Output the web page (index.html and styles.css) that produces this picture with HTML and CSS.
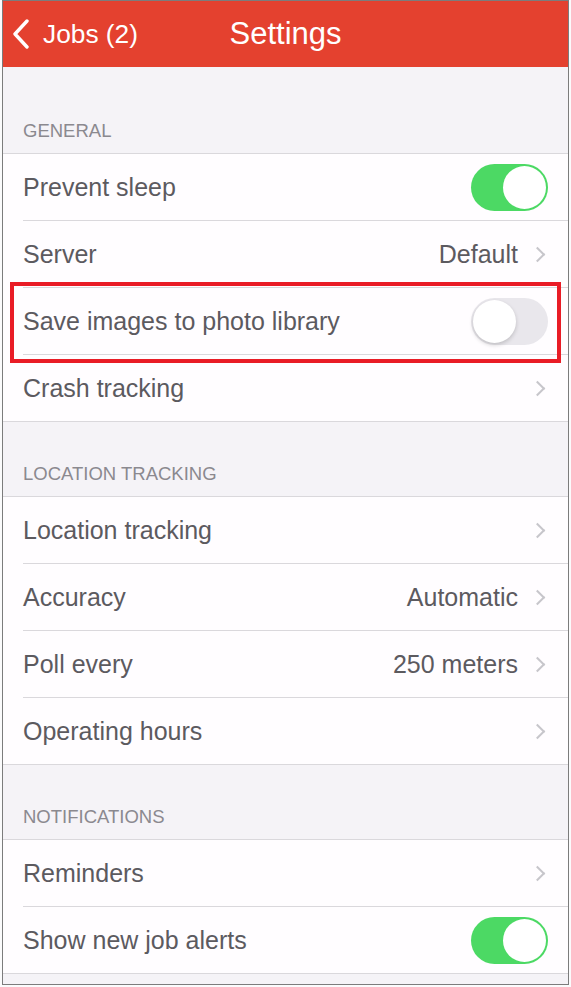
FILE: index.html
```html
<!DOCTYPE html>
<html lang="en">
<head>
  <meta charset="UTF-8">
  <title>Settings</title>
  <link rel="stylesheet" href="styles.css">
</head>
<body>
  <div class="frame">
    <header class="navbar">
      <a class="back" href="#">
        <svg width="18" height="30" viewBox="0 0 18 30"><polyline points="15,2 3,15 15,28" fill="none" stroke="#fff" stroke-width="3.4" stroke-linecap="round" stroke-linejoin="round"/></svg>
        <span>Jobs (2)</span>
      </a>
      <h1>Settings</h1>
      <span></span>
    </header>

    <div class="section-title first">GENERAL</div>
    <div class="group">
      <div class="row"><div class="cell"><span class="label">Prevent sleep</span><span class="switch on"></span></div></div>
      <div class="row"><div class="cell"><span class="label">Server</span><span class="value">Default</span><i class="chev"></i></div></div>
      <div class="row"><div class="cell"><span class="label">Save images to photo library</span><span class="switch"></span></div></div>
      <div class="row"><div class="cell"><span class="label">Crash tracking</span><i class="chev"></i></div></div>
    </div>

    <div class="section-title">LOCATION TRACKING</div>
    <div class="group">
      <div class="row"><div class="cell"><span class="label">Location tracking</span><i class="chev"></i></div></div>
      <div class="row"><div class="cell"><span class="label">Accuracy</span><span class="value">Automatic</span><i class="chev"></i></div></div>
      <div class="row"><div class="cell"><span class="label">Poll every</span><span class="value">250 meters</span><i class="chev"></i></div></div>
      <div class="row"><div class="cell"><span class="label">Operating hours</span><i class="chev"></i></div></div>
    </div>

    <div class="section-title">NOTIFICATIONS</div>
    <div class="group">
      <div class="row"><div class="cell"><span class="label">Reminders</span><i class="chev"></i></div></div>
      <div class="row"><div class="cell"><span class="label">Show new job alerts</span><span class="switch on"></span></div></div>
    </div>
    <div class="bottom-space"></div>

    <div class="highlight"></div>
  </div>
</body>
</html>
```

FILE: styles.css
```css
body {
  margin: 0;
  background: #fbfbfc;
  font-family: "Liberation Sans", Arial, sans-serif;
}
.frame {
  position: relative;
  box-sizing: border-box;
  width: 567px;
  height: 985px;
  margin-left: 2px;
  border: 1px solid #7c7c7c;
  background: #f5f3f7;
  overflow: hidden;
}
.navbar {
  height: 66px;
  background: #e4412f;
  color: #fff;
  display: grid;
  grid-template-columns: 1fr auto 1fr;
  align-items: center;
}
.back {
  display: flex;
  align-items: center;
  gap: 13px;
  padding-left: 9px;
  color: #fff;
  text-decoration: none;
  font-size: 26.3px;
}
.navbar h1 {
  margin: 0;
  font-weight: normal;
  font-size: 31px;
}
.section-title {
  height: 74px;
  box-sizing: border-box;
  padding: 0 20px 12px;
  display: flex;
  align-items: flex-end;
  color: #8b898f;
  font-size: 18.5px;
  line-height: 20px;
}
.section-title.first { height: 86px; }
.group {
  background: #fffdff;
  border-top: 1px solid #dad8dc;
  border-bottom: 1px solid #dad8dc;
}
.row { padding-left: 20px; }
.cell {
  height: 66px;
  display: flex;
  align-items: center;
  padding-right: 20px;
  border-bottom: 1px solid #dad8dc;
  color: #5c5a5f;
  font-size: 25px;
  padding-top: 1px;
  box-sizing: border-box;
  height: 67px;
}
.row:last-child .cell { border-bottom: none; height: 66px; }
.label { flex: 1; }
.value { margin-right: 14px; }
.chev {
  width: 9px;
  height: 9px;
  margin-right: 5px;
  border-top: 2.5px solid #c7c6cb;
  border-right: 2.5px solid #c7c6cb;
  transform: rotate(45deg);
}
.switch {
  position: relative;
  box-sizing: border-box;
  width: 77px;
  height: 47px;
  border-radius: 24px;
  background: #e9e7ec;
}
.switch::after {
  content: "";
  position: absolute;
  top: 2px;
  left: 2px;
  width: 43px;
  height: 43px;
  border-radius: 50%;
  background: #fff;
  box-shadow: 0 2px 4px rgba(0,0,0,0.18);
}
.switch.on { background: #4cd964; }
.switch.on::after { left: 32px; box-shadow: none; }
.bottom-space { height: 10px; }
.highlight {
  position: absolute;
  left: 7px;
  top: 281px;
  width: 551px;
  height: 81px;
  box-sizing: border-box;
  border: 4px solid #e91c26;
}
```
